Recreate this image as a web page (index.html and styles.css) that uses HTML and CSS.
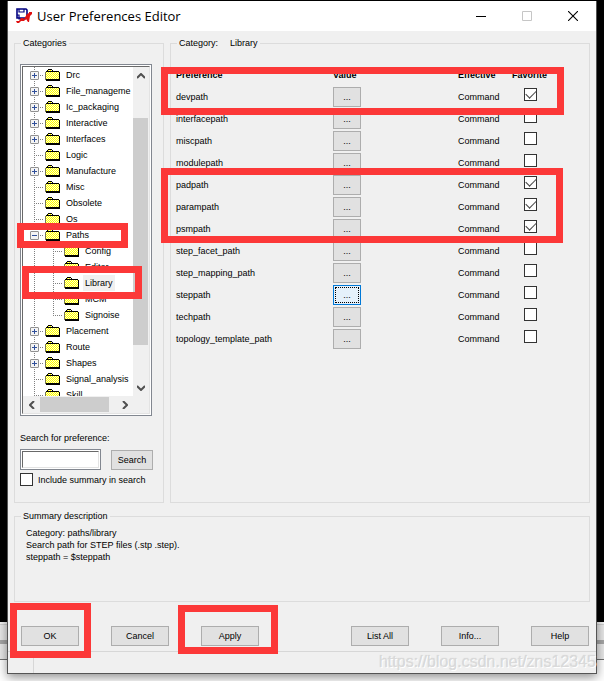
FILE: index.html
```html
<!DOCTYPE html>
<html lang="en">
<head>
<meta charset="utf-8">
<title>User Preferences Editor</title>
<link rel="stylesheet" href="styles.css">
</head>
<body>
<svg class="defs" aria-hidden="true">
  <defs>
    <pattern id="dither" width="2" height="2" patternUnits="userSpaceOnUse">
      <rect width="2" height="2" fill="#ffffd0"/>
      <rect width="1" height="1" fill="#ffff00"/>
      <rect x="1" y="1" width="1" height="1" fill="#ffff00"/>
    </pattern>
    <symbol id="folder" viewBox="0 0 15 12">
      <path d="M0 3h1V2h1V1h1V0h4v1h1v1h6v1h1v9H1v-1H0z" fill="#000"/>
      <path d="M1 3h13v7H1zM3 1h4v1H3z" fill="url(#dither)"/>
      <path d="M0 3h1v8H0z" fill="#77775a"/>
    </symbol>
  </defs>
</svg>
<main class="window">
  <header class="titlebar">
    <svg class="app-icon" viewBox="0 0 16 16" aria-hidden="true">
      <path d="M1 1h9l1 1v8H1z" fill="#fff" stroke="#000080" stroke-width="1.6"/>
      <path d="M3 1v3h5V1M1 7h2v4h7" fill="none" stroke="#000080" stroke-width="1.2"/>
      <path d="M0 13h3l2-3h2l1 1 3-5 2-1V4h3v2l-2 2-1 6h-1l-2-3-2 2-3 0-2 2H1z" fill="#e01010"/>
    </svg>
    <h1>User Preferences Editor</h1>
    <button class="caption" aria-label="Minimize"><svg viewBox="0 0 10 10"><path d="M0 5.5h10" stroke="#000"/></svg></button>
    <button class="caption" aria-label="Maximize" disabled><svg viewBox="0 0 10 10"><path d="M.5.5h9v9h-9z" fill="none" stroke="#c6c6c6"/></svg></button>
    <button class="caption" aria-label="Close"><svg viewBox="0 0 10 10"><path d="M0 0l10 10M10 0L0 10" stroke="#000" stroke-width="1.1"/></svg></button>
  </header>

  <div class="panes">
    <fieldset class="categories">
      <legend>Categories</legend>
      <div class="tree-box">
        <div class="tree-inner">
          <div class="tree-view">
            <ul class="tree">
              <li><div class="node"><button class="exp" aria-label="Expand Drc"></button><svg class="folder"><use href="#folder"/></svg><span>Drc</span></div></li>
              <li><div class="node"><button class="exp" aria-label="Expand File_manageme"></button><svg class="folder"><use href="#folder"/></svg><span>File_manageme</span></div></li>
              <li><div class="node"><button class="exp" aria-label="Expand Ic_packaging"></button><svg class="folder"><use href="#folder"/></svg><span>Ic_packaging</span></div></li>
              <li><div class="node"><button class="exp" aria-label="Expand Interactive"></button><svg class="folder"><use href="#folder"/></svg><span>Interactive</span></div></li>
              <li><div class="node"><button class="exp" aria-label="Expand Interfaces"></button><svg class="folder"><use href="#folder"/></svg><span>Interfaces</span></div></li>
              <li><div class="node leaf"><svg class="folder"><use href="#folder"/></svg><span>Logic</span></div></li>
              <li><div class="node"><button class="exp" aria-label="Expand Manufacture"></button><svg class="folder"><use href="#folder"/></svg><span>Manufacture</span></div></li>
              <li><div class="node leaf"><svg class="folder"><use href="#folder"/></svg><span>Misc</span></div></li>
              <li><div class="node leaf"><svg class="folder"><use href="#folder"/></svg><span>Obsolete</span></div></li>
              <li><div class="node leaf"><svg class="folder"><use href="#folder"/></svg><span>Os</span></div></li>
              <li><div class="node"><button class="exp open" aria-label="Collapse Paths"></button><svg class="folder"><use href="#folder"/></svg><span>Paths</span></div>
                <ul class="tree sub">
                  <li><div class="node leaf"><svg class="folder"><use href="#folder"/></svg><span>Config</span></div></li>
                  <li><div class="node leaf"><svg class="folder"><use href="#folder"/></svg><span>Editor</span></div></li>
                  <li><div class="node leaf"><svg class="folder"><use href="#folder"/></svg><span class="selected">Library</span></div></li>
                  <li><div class="node leaf"><svg class="folder"><use href="#folder"/></svg><span>MCM</span></div></li>
                  <li><div class="node leaf"><svg class="folder"><use href="#folder"/></svg><span>Signoise</span></div></li>
                </ul>
              </li>
              <li><div class="node"><button class="exp" aria-label="Expand Placement"></button><svg class="folder"><use href="#folder"/></svg><span>Placement</span></div></li>
              <li><div class="node"><button class="exp" aria-label="Expand Route"></button><svg class="folder"><use href="#folder"/></svg><span>Route</span></div></li>
              <li><div class="node"><button class="exp" aria-label="Expand Shapes"></button><svg class="folder"><use href="#folder"/></svg><span>Shapes</span></div></li>
              <li><div class="node leaf"><svg class="folder"><use href="#folder"/></svg><span>Signal_analysis</span></div></li>
              <li><div class="node leaf"><svg class="folder"><use href="#folder"/></svg><span>Skill</span></div></li>
            </ul>
          </div>
          <div class="vscroll">
            <button aria-label="Scroll up"><svg viewBox="0 0 8 6"><path d="M0 5l4-4 4 4"/></svg></button>
            <div class="track"><div class="thumb"></div></div>
            <button aria-label="Scroll down"><svg viewBox="0 0 8 6"><path d="M0 1l4 4 4-4"/></svg></button>
          </div>
          <div class="hscroll">
            <button aria-label="Scroll left"><svg viewBox="0 0 6 8"><path d="M5 0L1 4l4 4"/></svg></button>
            <div class="track"><div class="thumb"></div></div>
            <button aria-label="Scroll right"><svg viewBox="0 0 6 8"><path d="M1 0l4 4-4 4"/></svg></button>
          </div>
        </div>
      </div>
      <label class="search-label" for="search">Search for preference:</label>
      <div class="search-row">
        <span class="input-frame"><input id="search" type="text"></span>
        <button class="btn">Search</button>
      </div>
      <div class="check-row">
        <input class="check" type="checkbox" id="summary"><label for="summary">Include summary in search</label>
      </div>
      <div class="mark mark-paths"></div>
      <div class="mark mark-library"></div>
    </fieldset>

    <fieldset class="prefs">
      <legend>Category:<span class="current">Library</span></legend>
      <table>
        <thead>
          <tr><th class="c-name">Preference</th><th class="c-value">Value</th><th class="c-eff">Effective</th><th class="c-fav">Favorite</th></tr>
        </thead>
        <tbody>
          <tr><td>devpath</td><td><button class="btn" aria-label="Edit devpath">...</button></td><td>Command</td><td><input class="check" type="checkbox" aria-label="devpath favorite" checked></td></tr>
          <tr><td>interfacepath</td><td><button class="btn" aria-label="Edit interfacepath">...</button></td><td>Command</td><td><input class="check" type="checkbox" aria-label="interfacepath favorite"></td></tr>
          <tr><td>miscpath</td><td><button class="btn" aria-label="Edit miscpath">...</button></td><td>Command</td><td><input class="check" type="checkbox" aria-label="miscpath favorite"></td></tr>
          <tr><td>modulepath</td><td><button class="btn" aria-label="Edit modulepath">...</button></td><td>Command</td><td><input class="check" type="checkbox" aria-label="modulepath favorite"></td></tr>
          <tr><td>padpath</td><td><button class="btn" aria-label="Edit padpath">...</button></td><td>Command</td><td><input class="check" type="checkbox" aria-label="padpath favorite" checked></td></tr>
          <tr><td>parampath</td><td><button class="btn" aria-label="Edit parampath">...</button></td><td>Command</td><td><input class="check" type="checkbox" aria-label="parampath favorite" checked></td></tr>
          <tr><td>psmpath</td><td><button class="btn" aria-label="Edit psmpath">...</button></td><td>Command</td><td><input class="check" type="checkbox" aria-label="psmpath favorite" checked></td></tr>
          <tr><td>step_facet_path</td><td><button class="btn" aria-label="Edit step_facet_path">...</button></td><td>Command</td><td><input class="check" type="checkbox" aria-label="step_facet_path favorite"></td></tr>
          <tr><td>step_mapping_path</td><td><button class="btn" aria-label="Edit step_mapping_path">...</button></td><td>Command</td><td><input class="check" type="checkbox" aria-label="step_mapping_path favorite"></td></tr>
          <tr><td>steppath</td><td><button class="btn focused" aria-label="Edit steppath">...</button></td><td>Command</td><td><input class="check" type="checkbox" aria-label="steppath favorite"></td></tr>
          <tr><td>techpath</td><td><button class="btn" aria-label="Edit techpath">...</button></td><td>Command</td><td><input class="check" type="checkbox" aria-label="techpath favorite"></td></tr>
          <tr><td>topology_template_path</td><td><button class="btn" aria-label="Edit topology_template_path">...</button></td><td>Command</td><td><input class="check" type="checkbox" aria-label="topology_template_path favorite"></td></tr>
        </tbody>
      </table>
      <div class="mark mark-dev"></div>
      <div class="mark mark-pad"></div>
    </fieldset>
  </div>

  <fieldset class="summary">
    <legend>Summary description</legend>
    <p>Category: paths/library<br>Search path for STEP files (.stp .step).<br>steppath = $steppath</p>
  </fieldset>

  <div class="actions">
    <span class="slot"><button class="btn">OK</button><span class="mark mark-ok"></span></span>
    <button class="btn">Cancel</button>
    <span class="slot"><button class="btn">Apply</button><span class="mark mark-apply"></span></span>
    <button class="btn push">List All</button>
    <button class="btn">Info...</button>
    <button class="btn">Help</button>
  </div>
  <footer class="status"><span class="cell"></span><span class="watermark">https://blog.csdn.net/zns12345</span></footer>
</main>
</body>
</html>
```
FILE: styles.css
```css
* { box-sizing: border-box; }

body {
  margin: 0;
  min-height: 100vh;
  padding: 1px 7px 8px 7px;
  overflow: hidden;
  background: linear-gradient(#000 622px, #f5f5f5 622px, #f5f5f5 624px, #d0d0d0 624px, #d0d0d0 625px, #e8e8e8 625px, #e8e8e8 640px, #a6a6a6 640px, #a6a6a6 644px, #e8e8e8 644px, #e8e8e8 659px, #707070 659px, #707070 660px, #fff 660px);
  font: 9px/12px "Liberation Sans", Arial, sans-serif;
  color: #000;
}

.defs { position: absolute; width: 0; height: 0; }
button, input { font: inherit; color: inherit; margin: 0; padding: 0; }
fieldset { position: relative; margin: 0; min-width: 0; border: 1px solid #dcdcdc; }
legend { margin-left: 1px; padding: 0 2px; }

.window {
  background: #f0f0f0;
  border: 1px solid #555;
  border-top: 0;
  box-shadow: 0 3px 10px rgba(0, 0, 0, .45);
}

.titlebar { display: flex; align-items: center; height: 30px; padding-left: 8px; background: #fff; }
.titlebar h1 { flex: 1; margin: 0 0 0 5px; font: 13px/20px "Open Sans", sans-serif; }
.app-icon { width: 16px; height: 16px; }
.caption { display: flex; align-items: center; justify-content: center; width: 46px; height: 30px; border: 0; background: none; }
.caption svg { width: 10px; height: 10px; }

.panes { display: grid; grid-template-columns: 150px 1fr; gap: 6px; padding: 6px 6px 0; }
.categories { padding: 15px 10px 16px 5px; }

.tree-box { width: 132px; padding: 1px; border: 1px solid #828790; background: #fff; }
.tree-inner {
  display: grid;
  grid-template: 329px 17px / 1fr 16px;
  border: 1px solid #696969;
  border-right-color: #e3e3e3;
  border-bottom-color: #e3e3e3;
  background: #f0f0f0;
}
.tree-view { overflow: hidden; background: #fff; }
.tree {
  margin: 0;
  padding: 0;
  list-style: none;
  background: repeating-linear-gradient(#808080 0 1px, transparent 1px 2px) 11px 0 / 1px calc(100% - 8px) no-repeat;
}
.sub { margin-left: 19px; }
.node {
  display: flex;
  align-items: center;
  gap: 4px;
  height: 16px;
  padding-left: 7px;
  white-space: nowrap;
  background: repeating-linear-gradient(90deg, #808080 0 1px, transparent 1px 2px) 11px 8px / 10px 1px no-repeat;
}
.leaf { padding-left: 22px; }
.exp {
  flex: none;
  width: 9px;
  height: 9px;
  margin-right: 2px;
  border: 1px solid #919191;
  border-radius: 1px;
  background:
    linear-gradient(#2f4f9a, #2f4f9a) center / 5px 1px no-repeat,
    linear-gradient(#2f4f9a, #2f4f9a) center / 1px 5px no-repeat,
    #f4f4f4;
}
.exp.open { background: linear-gradient(#2f4f9a, #2f4f9a) center / 5px 1px no-repeat, #f4f4f4; }
.folder { flex: none; width: 15px; height: 12px; }
.node span { padding: 0 2px; line-height: 16px; }
.node .selected { background: #f0f0f0; }

.vscroll, .hscroll { display: flex; }
.vscroll { flex-direction: column; }
.hscroll { width: 110px; }
.vscroll button, .hscroll button { display: flex; align-items: center; justify-content: center; flex: none; width: 17px; height: 17px; border: 0; background: none; }
.vscroll button { width: 15px; }
.vscroll svg { width: 8px; height: 6px; }
.hscroll svg { width: 6px; height: 8px; }
.vscroll path, .hscroll path { fill: none; stroke: #505050; stroke-width: 2; }
.track { flex: 1; }
.thumb { background: #cdcdcd; }
.vscroll .thumb { width: 15px; height: 227px; margin-top: 34px; }
.hscroll .thumb { width: 69px; height: 15px; margin-top: 1px; }

.search-label { display: block; margin-top: 16px; }
.search-row { display: flex; align-items: center; justify-content: space-between; height: 21px; margin-top: 5px; }
.input-frame { display: flex; width: 81px; height: 21px; padding: 1px; border: 1px solid #828790; background: #fff; }
.input-frame input { width: 100%; border: 1px solid #696969; border-right-color: #e3e3e3; border-bottom-color: #e3e3e3; border-radius: 0; background: #fff; outline: 0; }
.search-row .btn { width: 42px; }
.check-row { display: flex; align-items: center; gap: 5px; height: 13px; margin-top: 3px; white-space: nowrap; }

.btn { width: 58px; height: 20px; border: 1px solid #adadad; border-radius: 0; background: #e1e1e1; }
.btn.focused { border-color: #0078d7; background: #e5f1fb; outline: 1px dotted #000; outline-offset: -3px; }
.check { position: relative; flex: none; appearance: none; width: 13px; height: 13px; border: 1px solid #333; background: #fff; }
.check:checked::before {
  content: "";
  display: block;
  width: 9px;
  height: 5px;
  margin: 2px 1px;
  border: solid #444;
  border-width: 0 0 1px 1px;
  transform: translateY(-1px) rotate(-45deg);
}

.prefs { padding: 15px 5px 0; }
.current { margin-left: 12px; }
table { border-collapse: collapse; table-layout: fixed; width: 374px; }
th, td { height: 22px; padding: 0; text-align: left; }
td:last-child { vertical-align: top; padding: 2px 0 0 12px; }
td .btn { display: block; width: 28px; }
td .check { display: block; }
.c-name { width: 157px; }
.c-value { width: 125px; }
.c-eff { width: 54px; }

.summary { margin: 7px 6px 0; padding: 5px 5px 38px; }
.summary p { margin: 0 6px; }

.actions { display: flex; gap: 32px; margin-top: 24px; padding: 0 7px 5px 13px; }
.slot { position: relative; }
.slot .btn { display: block; }
.push { margin-left: auto; }

.status { display: flex; justify-content: space-between; height: 22px; border-top: 1px solid #d7d7d7; }
.cell { width: 26px; margin-top: 5px; border-right: 1px solid #d7d7d7; }
.watermark { font-size: 16px; line-height: 20px; color: #dadada; text-shadow: 1px 1px 0 #fff, 0 0 1px #ccc; }

/* Highlight frames drawn over the dialog */
.mark { position: absolute; border: 7px solid #fc3838; pointer-events: none; }
.mark-paths { left: 2px; top: 174px; width: 111px; height: 25px; }
.mark-library { left: 7px; top: 217px; width: 120px; height: 33px; }
.mark-dev { left: -10px; top: 18px; width: 403px; height: 48px; }
.mark-pad { left: -10px; top: 119px; width: 402px; height: 75px; }
.mark-ok { left: -11px; top: -23px; width: 81px; height: 55px; }
.mark-apply { left: -23px; top: -21px; width: 100px; height: 49px; }
```
